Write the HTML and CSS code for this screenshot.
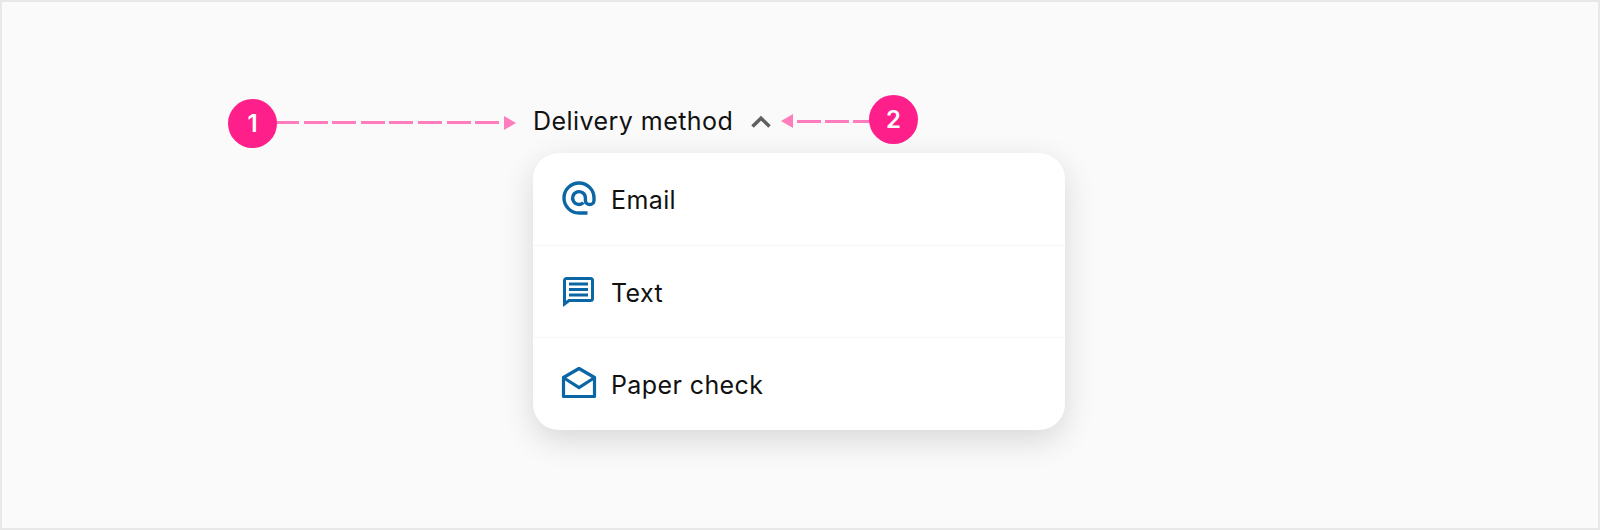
FILE: index.html
```html
<!DOCTYPE html>
<html lang="en">
<head>
<meta charset="utf-8">
<title>Delivery method</title>
<link rel="stylesheet" href="styles.css">
</head>
<body>
<main class="frame">
  <div class="dropdown">
    <div class="trigger">
      <span class="trigger-label">Delivery method</span>
      <svg class="chevron" width="20" height="13" viewBox="0 0 20 13"><path d="M1.500 11.500 10 3.200l8.500 8.300" fill="none" stroke="#5f5f5f" stroke-width="3.500"/></svg>
    </div>
    <ul class="menu">
      <li class="item">
        <svg class="icon" width="36" height="36" viewBox="0 0 36 36"><path d="M26.500 32H18A15 15 0 1 1 33 17v2.200a4.300 4.300 0 0 1-8.600 0V17a6.400 6.400 0 1 0-1.900 4.600" fill="none" stroke="#0b66a6" stroke-width="3.400"/></svg>
        <span class="item-label">Email</span>
      </li>
      <li class="item">
        <svg class="icon" width="36" height="36" viewBox="0 0 36 36"><path d="M3.500 30V6.500a2 2 0 0 1 2-2h24a2 2 0 0 1 2 2v18a2 2 0 0 1-2 2H8z" fill="#fff" stroke="#0b66a6" stroke-width="3"/><path d="M8 10h19M8 15.500h19M8 21h19" stroke="#0b66a6" stroke-width="3"/></svg>
        <span class="item-label">Text</span>
      </li>
      <li class="item">
        <svg class="icon" width="36" height="36" viewBox="0 0 36 36"><path d="M2.500 30.500V11.500L18 2.500l15.500 9v19z" fill="none" stroke="#0b66a6" stroke-width="3.200" stroke-linejoin="round"/><path d="M3 12l15 9.500L33 12" fill="none" stroke="#0b66a6" stroke-width="3.200"/></svg>
        <span class="item-label">Paper check</span>
      </li>
    </ul>
  </div>

  <div class="callout callout-one">
    <span class="badge">1</span>
    <span class="dash dash-long"></span>
    <span class="arrow arrow-right"></span>
  </div>
  <div class="callout callout-two">
    <span class="arrow arrow-left"></span>
    <span class="dash dash-short"></span>
    <span class="badge">2</span>
  </div>
</main>
</body>
</html>
```

FILE: styles.css
```css
* { box-sizing: border-box; }
html, body { margin: 0; height: 100%; }
body { font-family: "Inter", "Liberation Sans", sans-serif; color: #111; }

.frame {
  position: relative;
  width: 1600px;
  height: 530px;
  background: #fafafa;
  border: 2px solid #e8e8e8;
  padding: 85px 0 0 531px;
}

.dropdown { width: 532px; }

.trigger {
  display: flex;
  align-items: center;
  gap: 18px;
  height: 66px;
  padding-top: 2px;
}
.trigger-label { font-size: 25px; letter-spacing: 0.45px; }
.chevron { display: block; }

.menu {
  list-style: none;
  margin: 0;
  padding: 0;
  background: #fff;
  border-radius: 26px;
  box-shadow: 0 10px 32px rgba(0, 0, 0, 0.14);
}
.item {
  display: flex;
  align-items: center;
  gap: 14px;
  height: 92px;
  padding-left: 28px;
  font-size: 25px;
  letter-spacing: 0.4px;
  border-bottom: 1px solid #f6f6f6;
}
.item:first-child { height: 93px; }
.item:last-child { border-bottom: 0; }
.item-label { margin-top: 2px; }
.icon { display: block; flex: none; }

.callout { position: absolute; display: flex; align-items: center; }
.callout-one { left: 226px; top: 97px; }
.callout-two { left: 779px; top: 93px; }

.badge {
  position: relative;
  z-index: 1;
  display: flex;
  align-items: center;
  justify-content: center;
  width: 49px;
  height: 49px;
  border-radius: 50%;
  background: #ff1f8a;
  color: #fff;
  font-size: 24px;
  font-weight: 600;
}
.dash {
  display: block;
  height: 3px;
}
.dash-long {
  width: 225px;
  margin: -2px 4px 0 -2px;
  background: repeating-linear-gradient(90deg, #ff7dbd 0 24px, transparent 24px 28.6px);
}
.dash-short {
  width: 73px;
  margin: 3px -1px 0 4px;
  background: repeating-linear-gradient(90deg, #ff7dbd 0 24px, transparent 24px 28px);
}
.arrow { display: block; width: 0; height: 0; border-top: 7px solid transparent; border-bottom: 7px solid transparent; }
.arrow-right { border-left: 12px solid #ff7dbd; margin-top: -2px; }
.arrow-left { border-right: 12px solid #ff7dbd; margin-top: 3px; }
```
